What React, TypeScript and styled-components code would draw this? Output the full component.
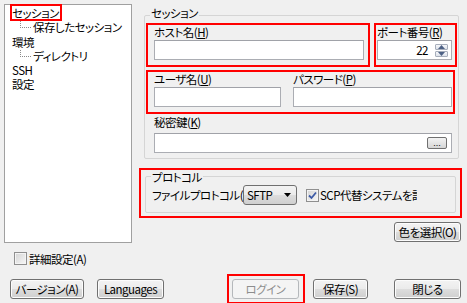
import React from 'react';
import styled, { createGlobalStyle } from 'styled-components';

const GlobalStyle = createGlobalStyle`
  html, body { margin: 0; padding: 0; background: #f0f0f0; }
  body {
    font-family: "Noto Sans CJK JP", "Liberation Sans", sans-serif;
    font-size: 11px;
    color: #000;
  }
`;

const Dialog = styled.div`
  width: 467px;
  height: 303px;
  box-sizing: border-box;
  padding: 4px 0 0 4px;
  background: #f0f0f0;
  overflow: hidden;
  font-family: "Noto Sans CJK JP", "Liberation Sans", sans-serif;
  font-size: 11.5px;
  font-feature-settings: "palt";
  letter-spacing: -0.5px;
  line-height: 14px;
`;

const TopArea = styled.div`
  display: flex;
  height: 239px;
`;

/* ---- tree ---- */
const Tree = styled.ul`
  margin: 0;
  padding: 1px 0 0 0;
  list-style: none;
  box-sizing: border-box;
  width: 128px;
  height: 239px;
  border: 1px solid #a0a0a0;
  background: #fff;
`;

const TreeItem = styled.li<{ $child?: boolean }>`
  position: relative;
  height: 14.3px;
  line-height: 14px;
  white-space: nowrap;
  padding-left: ${p => (p.$child ? 28 : 7)}px;

  ${p => p.$child && `
    &::before {
      content: "";
      position: absolute;
      left: 15px;
      top: 1px;
      width: 10px;
      height: 6px;
      border-left: 1px dotted #8a8a8a;
      border-bottom: 1px dotted #8a8a8a;
    }
  `}
`;

const Selected = styled.span`
  display: inline-block;
  height: 13px;
  padding-right: 1px;
  outline: 2px solid #ff0000;
`;

/* ---- right column ---- */
const Column = styled.div`
  margin-left: 7px;
  width: 323px;
  display: flex;
  flex-direction: column;
`;

const Group = styled.div<{ $titleTop: number }>`
  position: relative;
  box-sizing: border-box;
  border: 1px solid #d5d5d5;
  border-radius: 2px;

  & > .title {
    position: absolute;
    top: ${p => p.$titleTop}px;
    left: 5px;
    padding: 0 1px;
    background: #f0f0f0;
    line-height: 14px;
  }
`;

const SessionGroup = styled(Group)`
  margin: 11px 0 0 5px;
  width: 315px;
  padding: 7px 0 5px 1px;
`;

const ProtocolGroup = styled(Group)`
  margin: 6px 4px 3px 4px;
  height: 37px;
  padding: 8px 0 0 6px;
`;

const Highlight = styled.div<{ $w: number; $h: number }>`
  box-sizing: border-box;
  width: ${p => p.$w}px;
  height: ${p => p.$h}px;
  border: 2px solid #ff0000;
`;

const Row = styled.div<{ $gap?: number; $mt?: number }>`
  display: flex;
  gap: ${p => p.$gap ?? 0}px;
  margin-top: ${p => p.$mt ?? 0}px;
`;

const FieldBlock = styled.div<{ $pl?: number; $pr?: number }>`
  display: flex;
  flex-direction: column;
  padding-left: ${p => p.$pl ?? 0}px;
  padding-right: ${p => p.$pr ?? 0}px;
`;

const Label = styled.div<{ $mt?: number }>`
  height: 14px;
  line-height: 14px;
  white-space: nowrap;
  margin-top: ${p => p.$mt ?? 0}px;
  margin-bottom: 1px;
`;

const Field = styled.div<{ $w: number; $mt?: number }>`
  box-sizing: border-box;
  width: ${p => p.$w}px;
  height: 20px;
  margin-top: ${p => p.$mt ?? 0}px;
  border: 1px solid #abadb3;
  border-top-color: #a0a2a8;
  background: #fff;
  display: flex;
  align-items: center;
  justify-content: flex-end;
  padding-right: 3px;
`;

const SpinValue = styled.span`
  margin-right: 7px;
  line-height: 14px;
`;

const Spinner = styled.div`
  width: 13px;
  height: 13px;
  display: flex;
  flex-direction: column;
  gap: 1px;
`;

const SpinButton = styled.div`
  flex: 1;
  box-sizing: border-box;
  border: 1px solid #a7aebb;
  border-radius: 1px;
  background: linear-gradient(#f6f7fa, #dde2ea);
  display: flex;
  align-items: center;
  justify-content: center;
`;

const Button = styled.button<{ $w: number; $ml?: number; $disabled?: boolean }>`
  box-sizing: border-box;
  width: ${p => p.$w}px;
  height: 20px;
  margin: 0 0 0 ${p => p.$ml ?? 0}px;
  padding: 0;
  font: inherit;
  font-feature-settings: "palt";
  letter-spacing: inherit;
  line-height: 14px;
  white-space: nowrap;
  border-radius: 3px;
  border: 1px solid ${p => (p.$disabled ? '#b5b8bb' : '#707070')};
  color: ${p => (p.$disabled ? '#8d8d8d' : '#000')};
  background: ${p =>
    p.$disabled
      ? '#f4f4f4'
      : 'linear-gradient(#f3f3f3 0%, #ebebeb 50%, #dddddd 51%, #cfcfcf 100%)'};
  box-shadow: inset 0 0 0 1px ${p => (p.$disabled ? '#f4f4f4' : '#fcfcfc')};
`;

const DotsButton = styled.button`
  box-sizing: border-box;
  width: 20px;
  height: 12px;
  padding: 0;
  margin-right: 1px;
  border: 1px solid #707070;
  border-radius: 2px;
  background: linear-gradient(#f3f3f3, #d6d6d6);
  font: 9px "Liberation Sans", sans-serif;
  line-height: 6px;
  color: #000;
`;

const ProtoRow = styled.div`
  display: flex;
  align-items: center;
  height: 20px;
`;

const Clip = styled.span<{ $w: number; $ml?: number }>`
  display: inline-block;
  width: ${p => p.$w}px;
  margin-left: ${p => p.$ml ?? 0}px;
  overflow: hidden;
  white-space: nowrap;
  line-height: 14px;
`;

const Combo = styled.div`
  box-sizing: border-box;
  width: 54px;
  height: 20px;
  border: 1px solid #707070;
  border-radius: 3px;
  background: linear-gradient(#f3f3f3 0%, #ebebeb 50%, #dddddd 51%, #cfcfcf 100%);
  display: flex;
  align-items: center;
  justify-content: space-between;
  padding: 0 5px 0 3px;
`;

const Check = styled.span<{ $ml?: number }>`
  box-sizing: border-box;
  width: 13px;
  height: 13px;
  flex: none;
  margin-left: ${p => p.$ml ?? 0}px;
  border: 1px solid #8f8f8f;
  background: linear-gradient(135deg, #d4d4d4, #f7f7f7);
  box-shadow: inset 0 0 0 1px #f4f4f4;
  display: inline-flex;
  align-items: center;
  justify-content: center;
`;

const ColorRow = styled.div`
  display: flex;
  justify-content: flex-end;
  margin-top: 4px;
  padding-right: 1px;
`;

const CheckRow = styled.div`
  display: flex;
  align-items: center;
  gap: 2px;
  margin-top: 9px;
  height: 13px;
  padding-left: 10px;
  line-height: 14px;
`;

const BottomRow = styled.div`
  display: flex;
  align-items: center;
  margin-top: 9px;
  height: 30px;
  padding-left: 6px;
`;

const LoginHighlight = styled.div`
  box-sizing: border-box;
  margin-left: 63px;
  height: 30px;
  padding: 3px 4px 3px 3px;
  border: 2px solid #ff0000;
  display: flex;
  align-items: center;
`;

const Arrow = ({ up }: { up?: boolean }) => (
  <svg width="7" height="4" viewBox="0 0 7 4">
    <path d={up ? 'M0 4 L3.5 0 L7 4 Z' : 'M0 0 L3.5 4 L7 0 Z'} fill="#4d6185" />
  </svg>
);

export default function App() {
  return (
    <>
      <GlobalStyle />
      <Dialog>
        <TopArea>
          <Tree>
            <TreeItem>
              <Selected>セッション</Selected>
            </TreeItem>
            <TreeItem $child>保存したセッション</TreeItem>
            <TreeItem>環境</TreeItem>
            <TreeItem $child>ディレクトリ</TreeItem>
            <TreeItem>SSH</TreeItem>
            <TreeItem>設定</TreeItem>
          </Tree>

          <Column>
            <SessionGroup $titleTop={-10}>
              <span className="title">セッション</span>
              <Row $gap={4}>
                <Highlight $w={224} $h={44}>
                  <FieldBlock $pl={6}>
                    <Label>ホスト名(<u>H</u>)</Label>
                    <Field $w={210} />
                  </FieldBlock>
                </Highlight>
                <Highlight $w={83} $h={44}>
                  <FieldBlock $pl={1}>
                    <Label>ポート番号(<u>R</u>)</Label>
                    <Field $w={75}>
                      <SpinValue>22</SpinValue>
                      <Spinner>
                        <SpinButton><Arrow up /></SpinButton>
                        <SpinButton><Arrow /></SpinButton>
                      </Spinner>
                    </Field>
                  </FieldBlock>
                </Highlight>
              </Row>
              <Row $mt={3}>
                <Highlight $w={309} $h={44}>
                  <Row $gap={12}>
                    <FieldBlock $pl={6}>
                      <Label>ユーザ名(<u>U</u>)</Label>
                      <Field $w={127} />
                    </FieldBlock>
                    <FieldBlock>
                      <Label>パスワード(<u>P</u>)</Label>
                      <Field $w={159} />
                    </FieldBlock>
                  </Row>
                </Highlight>
              </Row>
              <FieldBlock $pl={8}>
                <Label $mt={1}>秘密鍵(<u>K</u>)</Label>
                <Field $w={298} $mt={3}>
                  <DotsButton>...</DotsButton>
                </Field>
              </FieldBlock>
            </SessionGroup>

            <Highlight $w={323} $h={50} style={{ marginTop: 9 }}>
              <ProtocolGroup $titleTop={-7}>
                <span className="title">プロトコル</span>
                <ProtoRow>
                  <Clip $w={91}>ファイルプロトコル(<u>F</u>)</Clip>
                  <Combo>
                    <span>SFTP</span>
                    <svg width="7" height="4" viewBox="0 0 7 4">
                      <path d="M0 0 L3.5 4 L7 0 Z" fill="#000" />
                    </svg>
                  </Combo>
                  <Check $ml={9}>
                    <svg width="9" height="9" viewBox="0 0 9 9">
                      <path d="M1 4.5 L3.5 7 L8 1.5" stroke="#3c5aa6" strokeWidth="1.8" fill="none" />
                    </svg>
                  </Check>
                  <Clip $w={97} $ml={1}>SCP代替システムを許可</Clip>
                </ProtoRow>
              </ProtocolGroup>
            </Highlight>

            <ColorRow>
              <Button $w={67}>色を選択(O)</Button>
            </ColorRow>
          </Column>
        </TopArea>

        <CheckRow>
          <Check />
          <span>詳細設定(A)</span>
        </CheckRow>

        <BottomRow>
          <Button $w={74}>バージョン(A)</Button>
          <Button $w={67} $ml={13}>Languages</Button>
          <LoginHighlight>
            <Button $w={67} $disabled>ログイン</Button>
          </LoginHighlight>
          <Button $w={55} $ml={8}>保存(S)</Button>
          <Button $w={67} $ml={26}>閉じる</Button>
        </BottomRow>
      </Dialog>
    </>
  );
}
